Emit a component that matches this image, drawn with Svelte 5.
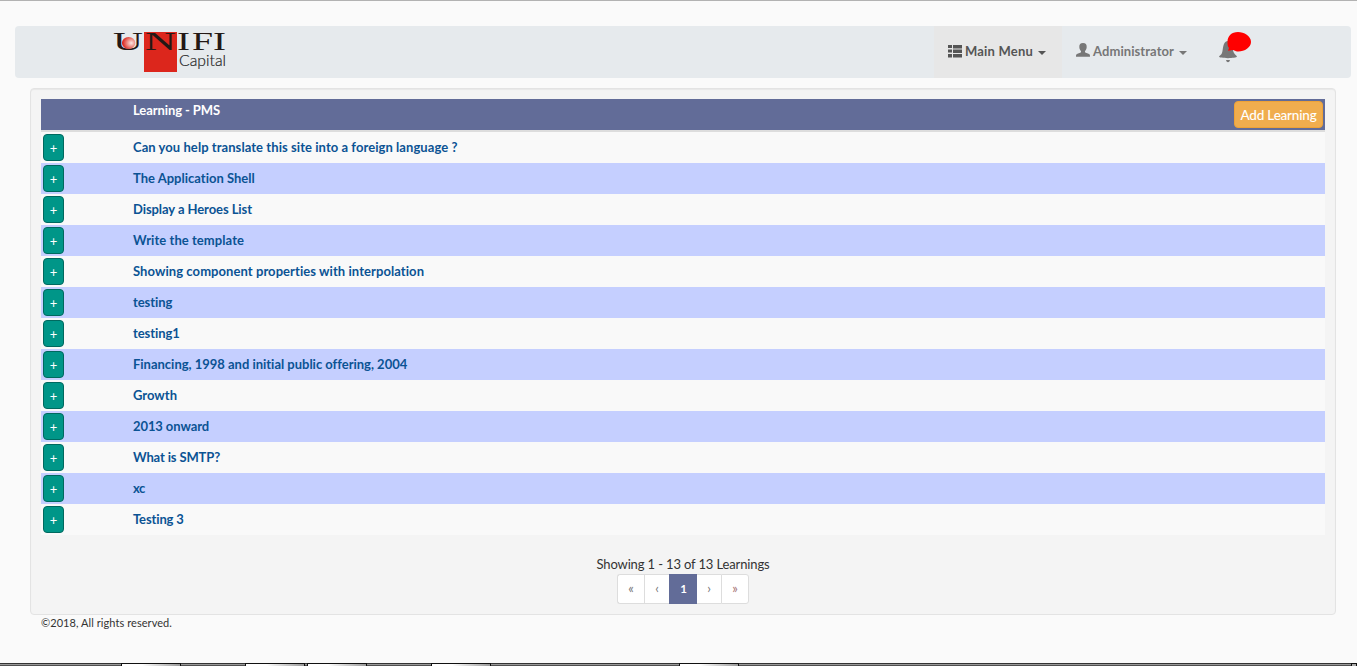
<script>
  const rows = [
    ['Can you help translate this site into a foreign language ?', 324.5],
    ['The Application Shell', 122],
    ['Display a Heroes List', 119],
    ['Write the template', 111],
    ['Showing component properties with interpolation', 291.5],
    ['testing', 39.5],
    ['testing1', 47],
    ['Financing, 1998 and initial public offering, 2004', 274],
    ['Growth', 44],
    ['2013 onward', 76],
    ['What is SMTP?', 87],
    ['xc', 12],
    ['Testing 3', 51]
  ];
  const pages = [['«', 27], ['‹', 25], ['1', 28], ['›', 24], ['»', 28]];
  const tabs = [[121, 60], [245, 60], [307, 60], [431, 60], [679, 60]];

  // Spreads or tightens the letters so that a label takes the given width.
  function fit(node, width) {
    const natural = node.getBoundingClientRect().width;
    node.style.letterSpacing = `${(width - natural) / node.textContent.length}px`;
  }
</script>

<div class="page">
  <nav>
    <svg class="logo" width="114" height="42" viewBox="0 0 114 42">
      <defs>
        <radialGradient id="ball" cx=".7" cy=".5" r=".65">
          <stop offset="0" stop-color="#fbe5e2" />
          <stop offset=".45" stop-color="#ee9289" />
          <stop offset="1" stop-color="#d8261e" />
        </radialGradient>
      </defs>
      <rect x="31" y="1" width="33" height="40" fill="#dc261c" />
      <g class="brand">
        <text x="0" y="18.5" textLength="30" lengthAdjust="spacingAndGlyphs">U</text>
        <text x="32" y="18.5" textLength="31" lengthAdjust="spacingAndGlyphs">N</text>
        <text x="64" y="18.5" textLength="13" lengthAdjust="spacingAndGlyphs">I</text>
        <text x="79" y="18.5" textLength="21" lengthAdjust="spacingAndGlyphs">F</text>
        <text x="100" y="18.5" textLength="13" lengthAdjust="spacingAndGlyphs">I</text>
      </g>
      <ellipse cx="15.6" cy="12" rx="6.7" ry="6" fill="url(#ball)" />
      <text class="capital" x="66" y="35" textLength="47" lengthAdjust="spacingAndGlyphs">Capital</text>
    </svg>
    <div class="menu active">
      <svg width="14" height="14" viewBox="0 0 14 14" fill="#555">
        <path d="M0 1h4v3H0zM5 1h9v3.4H5zM0 5.5h4v3H0zM5 5.5h9v3.4H5zM0 10h4v3.5H0zM5 10h9v3.5H5z" />
      </svg>
      <span class="label" use:fit={68}>Main Menu</span><i class="caret"></i>
    </div>
    <div class="menu admin">
      <svg width="14" height="14" viewBox="0 0 14 14" fill="#777">
        <path d="M7 0C4.3 0 3.2 1.5 3.3 3.9C3.4 5.9 4.3 7.3 5 8V9.2C4.4 10 1.3 10.4.6 11.2C0 11.8 0 12.6 0 13.8H14C14 12.6 14 11.8 13.4 11.2C12.7 10.4 9.6 10 9 9.2V8C9.7 7.3 10.6 5.9 10.7 3.9C10.8 1.5 9.7 0 7 0Z" />
      </svg>
      <span class="label" use:fit={81}>Administrator</span><i class="caret"></i>
    </div>
    <svg class="bell" width="35" height="33" viewBox="0 0 35 33">
      <path fill="#777" d="M8 10.5C9 9.8 11 9.8 12 10.8C15 13 14 18 16 22C17 24 19 25 19 25.6C19 26.6 14 27.2 10 27.2C5 27.2 1 26.6 1 25.6C1 25 3.5 24 4 22C5.3 18 4.5 13 8 10.5ZM8 29H12C11.5 30.6 11 31.2 10 31.2C9 31.2 8.5 30.6 8 29Z" />
      <path fill="red" d="M9.5 11C9.5 5 13.5 1 20 1C26 1 33 5 33 11C33 17 25 21.5 18 20.3C16 19 14.5 18.3 12 19.5L10 19.8L11 17C9.5 15.5 9.5 13 9.5 11Z" />
    </svg>
  </nav>

  <main>
    <div class="thead">
      <span use:fit={87}>Learning - PMS</span>
      <button class="add"><span use:fit={76}>Add Learning</span></button>
    </div>
    {#each rows as [title, width]}
      <div class="row">
        <button class="plus">+</button>
        <span class="title" use:fit={width}>{title}</span>
      </div>
    {/each}
    <div class="summary"><span use:fit={173}>Showing 1 - 13 of 13 Learnings</span></div>
    <div class="pagination">
      {#each pages as [mark, width]}
        <span class:current={mark === '1'} style:width="{width}px">{mark}</span>
      {/each}
    </div>
  </main>
  <footer><span use:fit={131}>©2018, All rights reserved.</span></footer>

  <div class="taskbar">
    {#each tabs as [left, width]}
      <i style:left="{left}px" style:width="{width}px"></i>
    {/each}
    <b></b>
  </div>
</div>

<style>
  :global(body) { margin: 0; background: #fafafa; }
  .page {
    box-sizing: border-box;
    height: 666px;
    overflow: hidden;
    display: flex;
    flex-direction: column;
    border-top: 1px solid #b2b2b2;
    padding-top: 25px;
    font: 13px Lato, sans-serif;
    color: #333;
  }
  span { white-space: nowrap; }
  nav {
    box-sizing: border-box;
    height: 52px;
    margin: 0 6px 0 15px;
    border-radius: 4px;
    background: #e6eaed;
    display: flex;
    align-items: flex-start;
    flex-shrink: 0;
  }
  .logo { margin: 5px 707px 0 98px; flex-shrink: 0; overflow: visible; }
  .brand { font: 25.5px "Liberation Serif", serif; fill: #231815; }
  .capital { font: 300 16.5px Lato, sans-serif; fill: #222; stroke: #222; stroke-width: .2px; }
  .menu {
    box-sizing: border-box;
    height: 52px;
    display: flex;
    align-items: center;
    font-weight: 700;
    color: #777;
    padding: 0 0 2px 14px;
    width: 142px;
  }
  .menu svg { margin-right: 3px; }
  .menu.active { width: 128px; background: #e7e7e7; color: #555; }
  .caret {
    border: 4px solid transparent;
    border-top-color: currentColor;
    border-bottom: 0;
    margin: 4px 0 0 5px;
  }
  .admin svg { position: relative; top: -1px; }
  .bell { margin: 5px 0 0 14px; flex-shrink: 0; }
  main {
    box-sizing: border-box;
    height: 527px;
    margin: 10px 21px 0 30px;
    padding: 10px;
    border: 1px solid #e3e3e3;
    border-radius: 4px;
    background: #f4f4f4;
    box-shadow: inset 0 1px 1px rgba(0, 0, 0, .05);
    flex-shrink: 0;
  }
  .thead {
    height: 31px;
    border-bottom: 2px solid #ddd;
    background: #626c98;
    background-clip: padding-box;
    color: #fff;
    font-weight: 700;
    display: flex;
    justify-content: space-between;
    padding-left: 92px;
    line-height: 23px;
  }
  button { box-sizing: border-box; padding: 0; color: #fff; font-family: Lato, sans-serif; }
  .add {
    width: 89px;
    height: 27px;
    margin: 2px 2px 0 0;
    border: 1px solid #eea236;
    border-radius: 4px;
    background: #f0ad4e;
    font-size: 13.5px;
    font-weight: 500;
    line-height: 24px;
  }
  .row {
    height: 31px;
    display: flex;
    align-items: center;
    background: #f9f9f9;
    color: #0b5394;
    font-weight: 700;
  }
  .row:nth-child(odd) { background: #c5cfff; }
  .title { padding-bottom: 2px; }
  .plus {
    width: 21px;
    height: 27px;
    margin: 0 69px 0 2px;
    border: 1px solid #00695f;
    border-radius: 4px;
    background: #009688;
    font-size: 13px;
  }
  .summary { text-align: center; line-height: 20px; margin: 19px 0 0 0; }
  .pagination {
    box-sizing: border-box;
    width: 132px;
    height: 30px;
    margin: 0 auto;
    display: flex;
  }
  .pagination span {
    box-sizing: border-box;
    border: 1px solid #ddd;
    border-right: 0;
    background: #fff;
    color: #777;
    text-align: center;
    font-size: 13px;
    line-height: 27px;
  }
  .pagination span:first-child { border-radius: 3px 0 0 3px; }
  .pagination span:last-child { border-right: 1px solid #ddd; border-radius: 0 3px 3px 0; color: #a77474; }
  .pagination .current { background: #626c98; border-color: #626c98; color: #fff; font-size: 11.5px; font-weight: 700; line-height: 28px; }
  .pagination .current + span { border-left: 0; }
  footer { font-size: 11px; line-height: 16px; padding-left: 41px; }
  .taskbar {
    position: relative;
    height: 3px;
    flex-shrink: 0;
    margin-top: auto;
    background: linear-gradient(#333 0 1px, #999 1px 2px, #505050 2px);
  }
  .taskbar i, .taskbar b {
    position: absolute;
    box-sizing: border-box;
    top: 0;
    height: 3px;
    border: solid #111;
    border-width: 1px 1px 0;
    background: linear-gradient(90deg, #fff 35%, #999);
  }
  .taskbar b { left: 1351px; width: 6px; background: #aaa; }
</style>
